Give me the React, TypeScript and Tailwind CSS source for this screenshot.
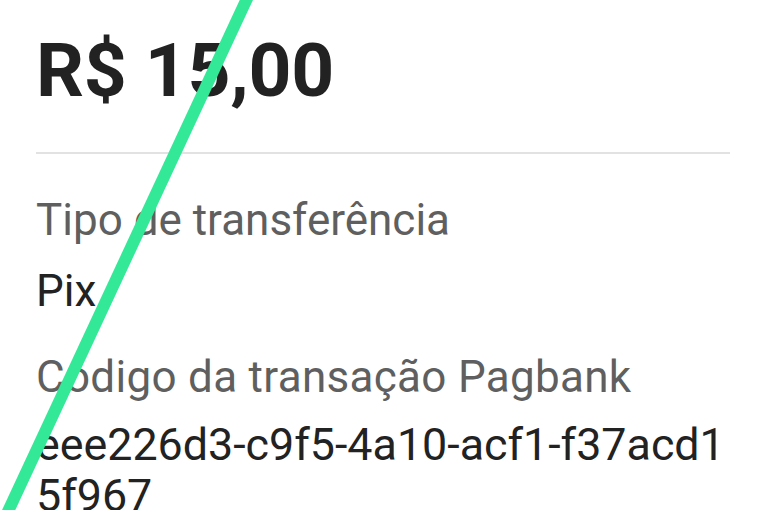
import React from "react";

export default function App() {
  return (
    <div
      className="relative w-[765px] h-[510px] overflow-hidden bg-white"
      style={{ fontFamily: "Roboto, 'Liberation Sans', sans-serif" }}
    >
      <div className="flex flex-col pl-[36px] pr-[35px] pt-[30px]">
        <div className="text-[75px] leading-[80px] font-bold text-[#222222] tracking-[-0.3px]">
          R$ 15,00
        </div>
        <div className="mt-[42px] h-[1.5px] bg-[#e2e2e2]" />
        <div className="mt-[40px] flex flex-col">
          <div className="text-[44px] leading-[52px] text-[#5f5f5f]">Tipo de transferência</div>
          <div className="mt-[19px] text-[44px] leading-[52px] text-[#222222]">Pix</div>
        </div>
        <div className="mt-[34px] flex flex-col">
          <div className="text-[44px] leading-[52px] text-[#5f5f5f] tracking-[0.3px]">Código da transação Pagbank</div>
          <div className="mt-[16px] text-[44.8px] leading-[51px] text-[#222222]">
            <div>eee226d3-c9f5-4a10-acf1-f37acd1</div>
            <div>5f967</div>
          </div>
        </div>
      </div>
      <svg className="absolute inset-0 pointer-events-none" width="765" height="510" viewBox="0 0 765 510">
        <line x1="251" y1="-10" x2="4" y2="520" stroke="#33e897" strokeWidth="12" />
      </svg>
    </div>
  );
}
